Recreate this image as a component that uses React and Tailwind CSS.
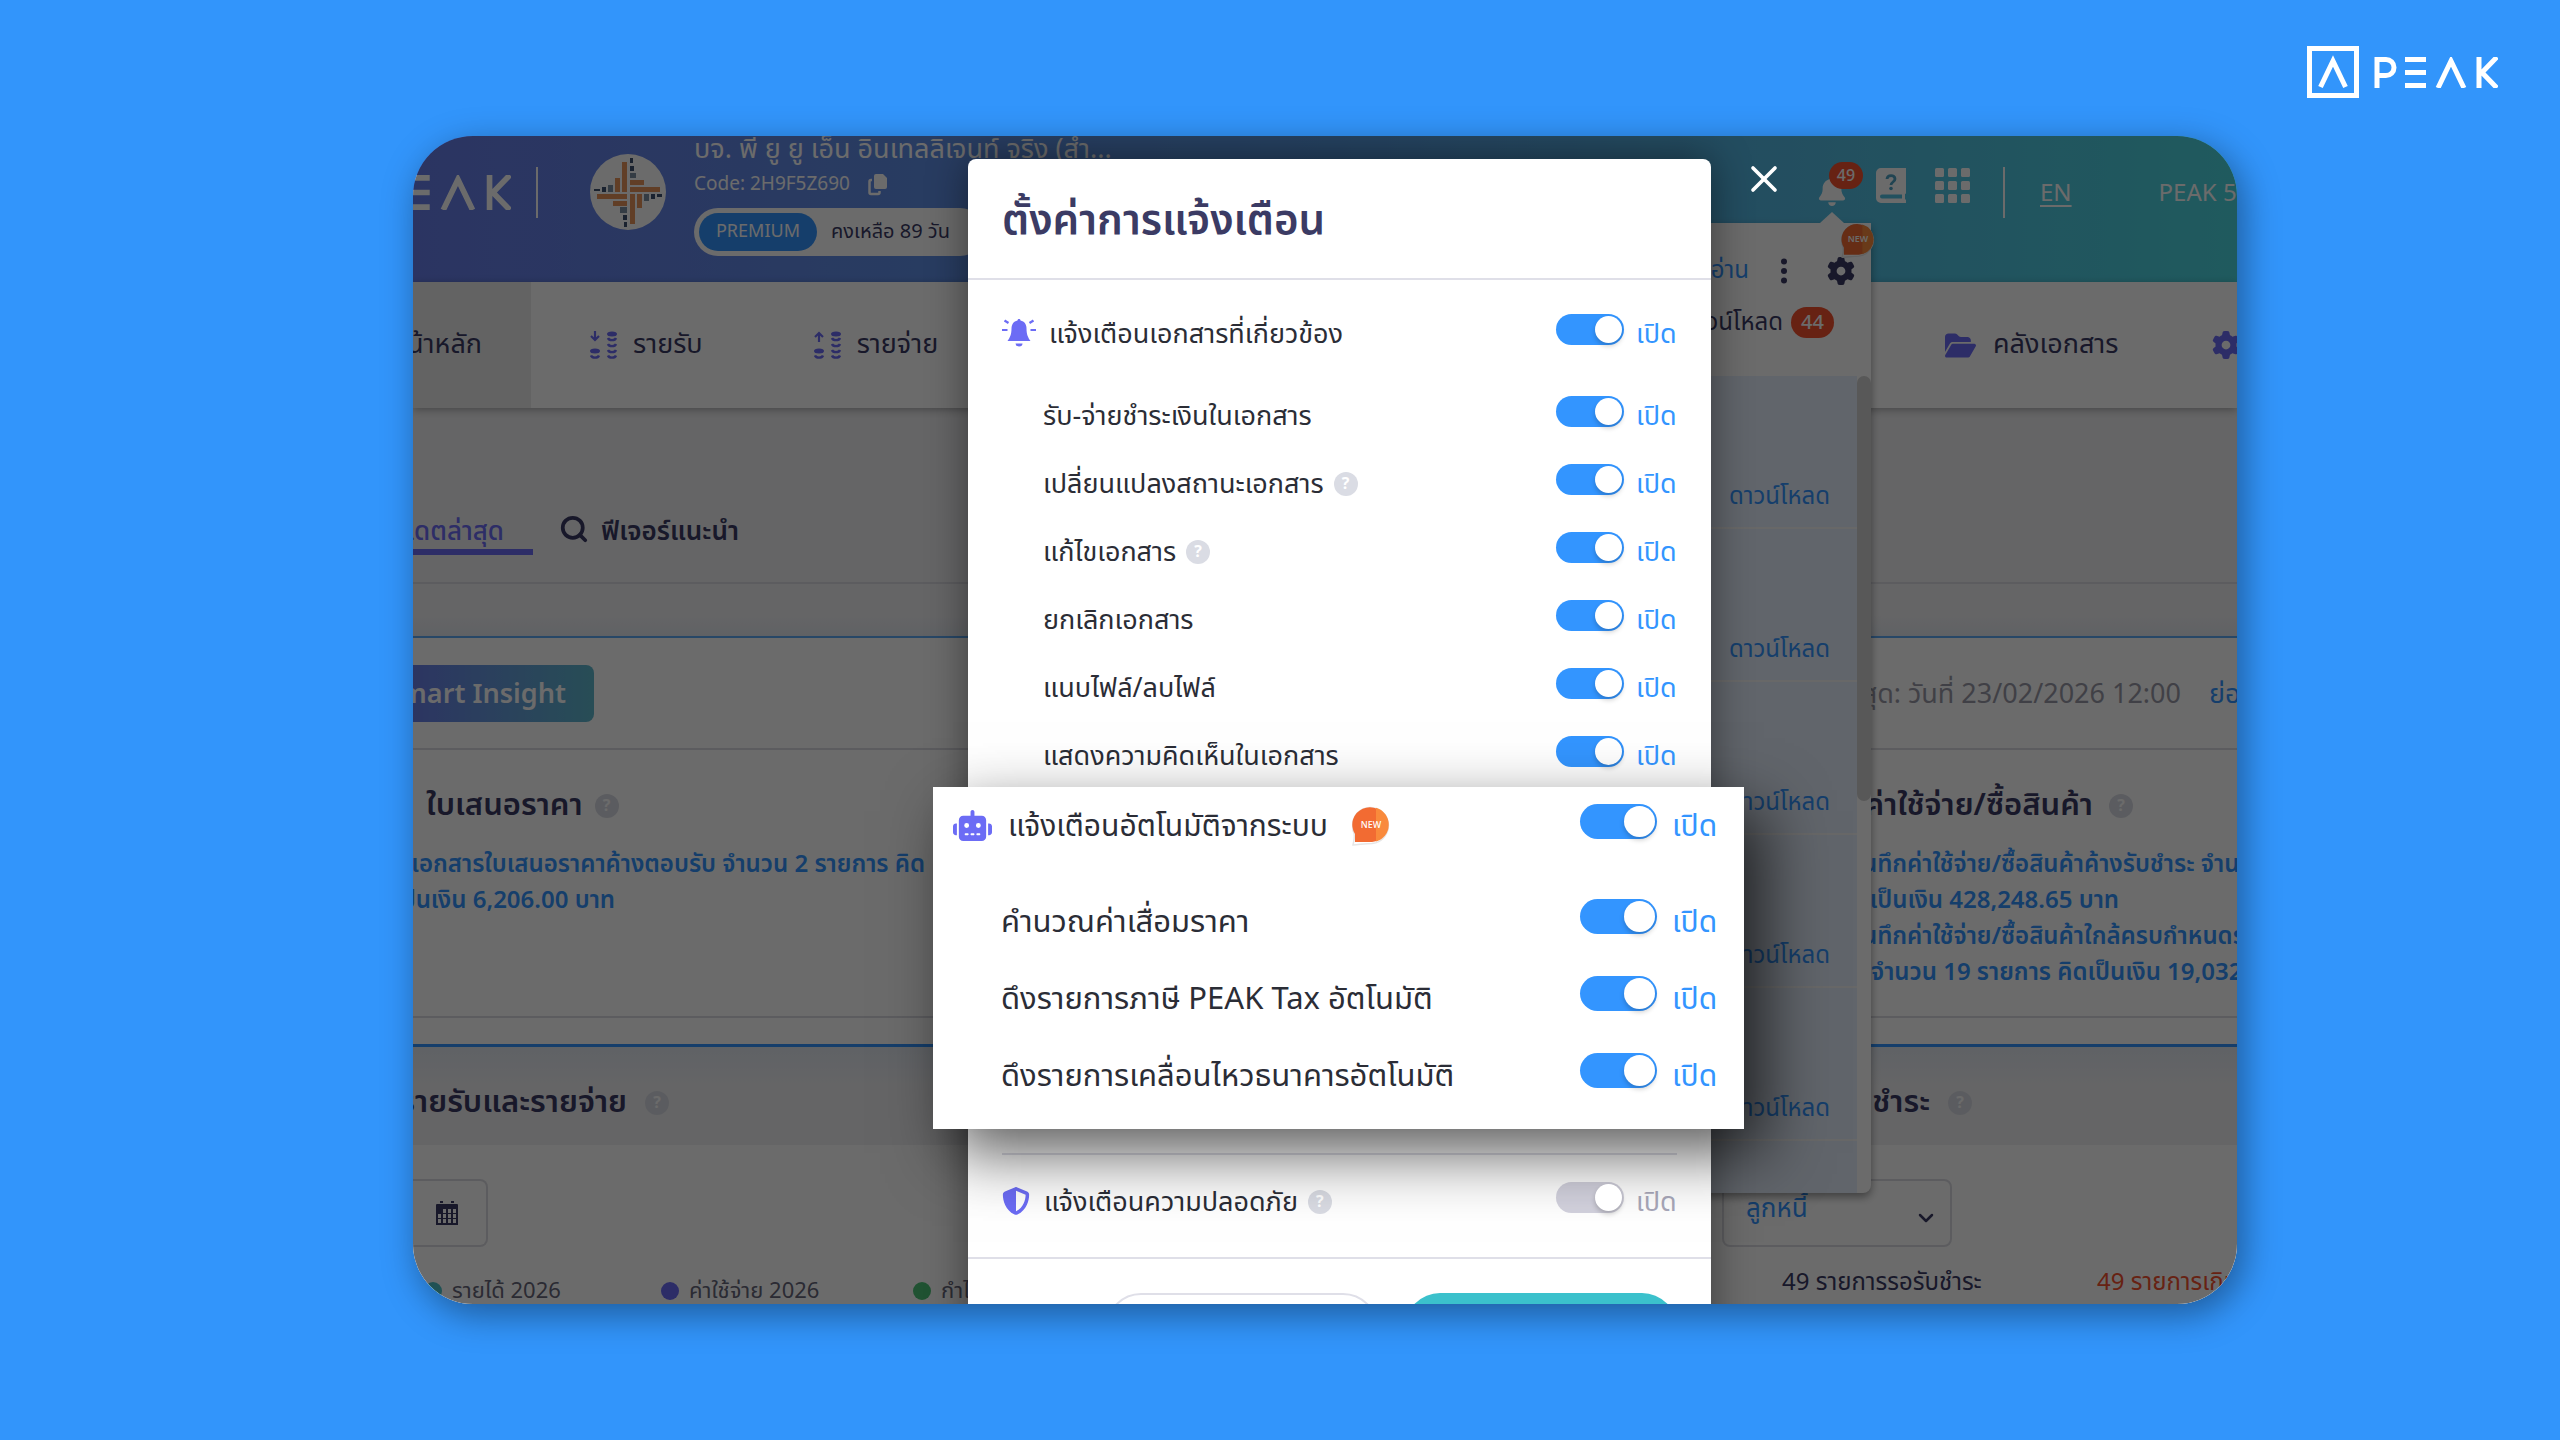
import React from "react";
import { FaBell, FaFolderOpen, FaGear, FaRobot, FaShieldHalved } from "react-icons/fa6";
import { ChevronDown, Search, X } from "lucide-react";

const INK = "text-[#3b3b64]";

function PeakLetters({ className }) {
  return (
    <svg viewBox="0 0 124 31" className={className} fill="none" stroke="currentColor" strokeWidth="5" aria-hidden="true">
      <path d="M3 31V2.500H12a8 8 0 0 1 0 16H3" />
      <path d="M31 2.500H52M31 15.500H52M31 28.500H52" />
      <path d="M64 31L77 4L90 31" />
      <path d="M105 0V31M123 0L108 15.500L123 31" />
    </svg>
  );
}

function BrandLogo() {
  return (
    <div className="flex items-center gap-[15px] text-white" role="img" aria-label="PEAK">
      <svg viewBox="0 0 52 52" className="size-[52px]" fill="none" stroke="currentColor" aria-hidden="true">
        <rect x="2.500" y="2.500" width="47" height="47" strokeWidth="5" />
        <path d="M13.500 41L26 15L38.500 41" strokeWidth="5" />
      </svg>
      <PeakLetters className="h-[31px] w-[124px]" />
    </div>
  );
}

function CompanyMark() {
  return (
    <svg viewBox="0 0 76 76" className="size-[76px] shrink-0" aria-hidden="true">
      <circle cx="38" cy="38" r="38" fill="#fff" />
      <g fill="#e8955c">
        <rect x="32" y="8" width="5" height="30" />
        <rect x="25" y="24" width="5" height="14" />
        <rect x="40" y="33" width="30" height="5" />
        <rect x="40" y="26" width="14" height="5" />
        <rect x="7" y="40" width="30" height="5" />
        <rect x="23" y="47" width="14" height="5" />
        <rect x="40" y="40" width="5" height="30" />
        <rect x="47" y="40" width="5" height="14" />
      </g>
      <g fill="#7d8fa3">
        <rect x="40" y="19" width="6" height="5" />
        <rect x="18" y="31" width="5" height="7" />
        <rect x="54" y="40" width="5" height="7" />
        <rect x="30" y="53" width="7" height="6" />
      </g>
      <g fill="#3f5270">
        <rect x="40" y="12" width="4" height="5" />
        <rect x="12" y="33" width="4" height="5" />
        <rect x="61" y="40" width="4" height="5" />
        <rect x="33" y="61" width="4" height="5" />
        <rect x="40" y="4" width="3" height="5" />
        <rect x="4" y="35" width="6" height="2" />
        <rect x="67" y="40" width="5" height="3" />
        <rect x="34" y="68" width="3" height="5" />
      </g>
    </svg>
  );
}

function CopyIcon() {
  return (
    <svg viewBox="0 0 20 22" className="h-[22px] w-5" aria-hidden="true">
      <path d="M8 0h7l4 4v9a2 2 0 0 1-2 2H8a2 2 0 0 1-2-2V2a2 2 0 0 1 2-2z" fill="currentColor" />
      <path d="M4 6H3a1.500 1.500 0 0 0-1.500 1.500v11A1.500 1.500 0 0 0 3 20h7a1.500 1.500 0 0 0 1.500-1.500V17" fill="none" stroke="currentColor" strokeWidth="2.500" />
    </svg>
  );
}

function HelpBookIcon() {
  return (
    <svg viewBox="0 0 30 35" className="h-[35px] w-[30px]" aria-hidden="true">
      <path fillRule="evenodd" d="M5 0H30V25.500L29 26V31L30 32V35H5a5 5 0 0 1-5-5V5a5 5 0 0 1 5-5zM6 26.500a2 2 0 0 0 0 4H26V26.500z" fill="#fff" />
      <path d="M11 11c.3-4.500 8-4.500 8 0 0 3-4 3-4 6" fill="none" stroke="#4fa3c4" strokeWidth="2.800" />
      <circle cx="15" cy="20.500" r="1.800" fill="#4fa3c4" />
    </svg>
  );
}

function GridIcon() {
  return (
    <svg viewBox="0 0 35 35" className="size-[35px]" fill="#fff" aria-hidden="true">
      {[0, 13, 26].map((y) => [0, 13, 26].map((x) => <rect key={`${x}-${y}`} x={x} y={y} width="9" height="9" rx="1.500" />))}
    </svg>
  );
}

function CoinsIcon({ up }) {
  return (
    <svg viewBox="0 0 28 28" className="size-7" fill="none" stroke="#6c6cf5" aria-hidden="true">
      {up ? <path d="M5 11V2M1 6L5 2L9 6" strokeWidth="2.200" /> : <path d="M5 0V9M1 5L5 9L9 5" strokeWidth="2.200" />}
      <ellipse cx="5" cy="20" rx="5" ry="2.500" fill="#6c6cf5" stroke="none" />
      <ellipse cx="22" cy="3" rx="5" ry="2.500" fill="#6c6cf5" stroke="none" />
      <path d="M1 24.500c1 2.800 7 2.800 8 0" strokeWidth="2.400" />
      <path d="M18 7c1 2.800 7 2.800 8 0M18 13c1 2.800 7 2.800 8 0M18 19c1 2.800 7 2.800 8 0M18 24.500c1 2.800 7 2.800 8 0" strokeWidth="2.400" />
    </svg>
  );
}

function CalendarIcon() {
  return (
    <svg viewBox="0 0 22 24" className="h-6 w-[22px]" aria-hidden="true">
      <path d="M0 4a1 1 0 0 1 1-1H21a1 1 0 0 1 1 1V24H0z" fill="#3b3b64" />
      <rect x="4" y="0" width="3" height="2" fill="#3b3b64" />
      <rect x="15" y="0" width="3" height="2" fill="#3b3b64" />
      <g fill="#fff">
        {[8, 13, 18].map((y) => [2, 7, 12, 17].map((x) => (x === 2 && y === 8 ? null : <rect key={`${x}-${y}`} x={x} y={y} width="3" height="4" />)))}
      </g>
    </svg>
  );
}

function AlarmBellIcon() {
  return (
    <svg viewBox="0 0 34 28" className="h-7 w-[34px]" fill="#6c6cf5" aria-hidden="true">
      <path d="M17 0c1 0 1.500.7 1.500 1.500 4 .8 6 4 6 8 0 6 1.500 9 4 12.500H5.500c2.500-3.500 4-6.500 4-12.500 0-4 2-7.200 6-8C15.500.7 16 0 17 0z" />
      <path d="M13.500 24.500h7a3.500 3 0 0 1-7 0z" />
      <path d="M2.500 1.500L6.500 4M31.500 1.500L27.500 4M0 11H5.500M34 11H28.500" stroke="#6c6cf5" strokeWidth="2.200" />
    </svg>
  );
}

function NewBadge({ className, textClass }) {
  return (
    <svg viewBox="0 0 38 42" className={className} role="img" aria-label="NEW">
      <path d="M1 39C2 34 3 32 2 27A18 18 0 1 1 20 37.500C14 37.500 8 38.500 1 39z" fill="#fff" stroke="#e6e6e6" strokeWidth="1.500" />
      <path d="M3 36V28A17.500 17.500 0 1 1 20 36z" fill="#f26b32" />
      <path d="M24 1.800A17.500 17.500 0 0 1 24 35.500z" fill="#f98a3c" />
      <text x="19" y="22" textAnchor="middle" fill="#fff" className={textClass}>NEW</text>
    </svg>
  );
}

function Help() {
  return (
    <span className="flex size-6 shrink-0 items-center justify-center rounded-full bg-[#dadce4] text-base leading-6 font-bold text-white">?</span>
  );
}

function Toggle({ id, on = true, large }) {
  const size = large
    ? "h-[35px] w-[77px] before:size-[31px] checked:before:translate-x-[42px]"
    : "h-[31px] w-[68px] before:size-[27px] checked:before:translate-x-[37px]";
  const tone = on ? "bg-[#3395ff]" : "bg-[#d3d2de]";
  return (
    <input
      id={id}
      type="checkbox"
      role="switch"
      defaultChecked
      disabled={!on}
      className={`${size} ${tone} shrink-0 appearance-none rounded-full p-0.5 before:block before:rounded-full before:bg-white before:shadow-[0_3px_5px_rgba(0,0,0,0.2)] before:content-['']`}
    />
  );
}

function SettingRow({ id, label, icon, help, badge, on = true, large, section, className }) {
  const size = large ? "leading-10" : "leading-9";
  const labelSize = large ? (section ? "text-[30px]" : "text-[31px]") : "text-[27px]";
  return (
    <div className={`flex items-center ${className}`}>
      {icon && <span className="shrink-0 pt-2">{icon}</span>}
      <label htmlFor={id} className={`pt-3 whitespace-nowrap text-[#2b2d36] ${size} ${labelSize}`}>
        {label}
      </label>
      {help && <span className="ml-2.5 pt-2.5"><Help /></span>}
      {badge && <NewBadge className="mt-3 ml-2 h-[42px] w-[38px]" textClass="text-[9px] font-medium" />}
      <div className={`ml-auto flex items-center ${large ? "gap-[15px]" : "gap-3"}`}>
        <Toggle id={id} on={on} large={large} />
        <span className={`pt-3 ${size} ${large ? "w-11 text-[30px]" : "w-[41px] text-[27px]"} ${on ? "text-[#3395ff]" : "text-[#a9a8ba]"}`}>เปิด</span>
      </div>
    </div>
  );
}

function TopBar() {
  return (
    <header className="flex h-[146px] shrink-0 items-start bg-linear-to-r from-[#677de9] via-[#5a9de6] to-[#4bd7e0] text-white">
      <div className="flex w-[98px] justify-end pt-[39px]">
        <PeakLetters className="h-[35px] w-[140px] shrink-0" />
      </div>
      <span className="mt-[31px] ml-[25px] h-[51px] w-0.5 bg-white" />
      <span className="mt-[18px] ml-[52px]"><CompanyMark /></span>
      <div className="ml-7 flex flex-col whitespace-nowrap">
        <div className="-mt-1.5 h-10 text-[27px] leading-10">บจ. พี ยู ยู เอ็น อินเทลลิเจนท์ จริง (สำ...</div>
        <div className="flex h-[30px] items-center gap-[18px] text-[19px] leading-7">
          Code: 2H9F5Z690 <CopyIcon />
        </div>
        <div className="mt-2 flex h-12 w-[290px] items-center rounded-full bg-white p-[5px] text-[#3b3b64]">
          <span className="flex h-full w-[118px] items-center justify-center rounded-full bg-[#3395ff] text-lg text-white">PREMIUM</span>
          <span className="ml-3.5 text-xl">คงเหลือ 89 วัน</span>
        </div>
      </div>
      <div className="ml-auto flex w-[420px] items-start">
        <button type="button" aria-label="การแจ้งเตือน" className="relative pt-[40px]">
          <FaBell className="size-[30px]" />
          <span className="absolute top-[26px] left-3 flex h-[27px] w-[34px] items-center justify-center rounded-full bg-[#f5512f] text-base font-medium">49</span>
        </button>
        <span className="mt-8 ml-[29px]"><HelpBookIcon /></span>
        <span className="mt-8 ml-[29px]"><GridIcon /></span>
        <span className="mt-[31px] ml-[33px] h-[51px] w-0.5 bg-white" />
        <a href="#en" className="mt-11 ml-[35px] text-2xl leading-7 underline underline-offset-4">EN</a>
        <span className="mt-11 ml-[87px] text-2xl leading-7 whitespace-nowrap">PEAK 5</span>
      </div>
    </header>
  );
}

function NavBar() {
  return (
    <nav className={`relative flex h-[126px] shrink-0 items-center bg-white text-[27px] leading-10 whitespace-nowrap shadow-[0_2px_8px_rgba(0,0,0,0.3)] ${INK}`}>
      <a href="#home" className="flex h-full w-[118px] items-center justify-end bg-[#ececec] pr-[49px]">หน้าหลัก</a>
      <a href="#income" className="ml-[59px] flex items-center gap-[15px]"><CoinsIcon />รายรับ</a>
      <a href="#expense" className="ml-[111px] flex items-center gap-[15px]"><CoinsIcon up />รายจ่าย</a>
      <div className="-mr-[3px] ml-auto flex w-[295px] items-center">
        <a href="#files" className="flex items-center gap-[17px]"><FaFolderOpen className="size-[31px] text-[#6c6cf5]" />คลังเอกสาร</a>
        <FaGear className="ml-auto size-7 shrink-0 text-[#6c6cf5]" />
      </div>
    </nav>
  );
}

function Legend({ color, children, className }) {
  return (
    <span className={`flex items-center gap-2.5 ${className}`}>
      <i className={`size-[18px] rounded-full ${color}`} />
      {children}
    </span>
  );
}

function PanelTitle({ width, children }) {
  return (
    <h2 className={`flex items-center border-t-[3px] border-[#3395ff] bg-linear-to-b from-[#e3e9f1] to-[#f1f1f3] to-40% pt-3.5 text-[31px] leading-10 font-semibold ${INK}`}>
      <span className={`flex justify-end ${width}`}>{children}</span>
      <span className="ml-[18px]"><Help /></span>
    </h2>
  );
}

function Dashboard() {
  return (
    <main className="flex grow flex-col bg-[#f1f1f3] whitespace-nowrap">
      <div className="flex h-[176px] items-end border-b-2 border-[#dcdce2] pb-[27px] text-[26px] leading-9 font-semibold">
        <div className="flex h-[41px] w-[120px] justify-end border-b-[6px] border-[#6c6cf5] pr-[29px] font-medium text-[#6c6cf5]">อัปเดตล่าสุด</div>
        <div className={`ml-[26px] flex h-[41px] items-start gap-3 ${INK}`}>
          <Search className="size-[30px]" strokeWidth={3} />
          ฟีเจอร์แนะนำ
        </div>
      </div>
      <div className="h-[52px] bg-linear-to-b from-transparent from-60% to-[#e4e8ef]" />
      <section className="flex h-[114px] items-center border-t-2 border-b-2 border-t-[#5ea9f5] border-b-[#dcdce2] bg-white">
        <button type="button" className="flex h-[57px] w-[181px] items-center justify-end rounded-r-lg bg-linear-to-r from-[#6a7fe9] to-[#5fb8cd] pt-1 pr-7 text-[27px] font-semibold text-white">
          Smart Insight
        </button>
        <div className="ml-auto flex w-[366px] pt-1 text-[27px] leading-10">
          <span className="flex w-[310px] justify-end text-[#9a9aa8]">ข้อมูลล่าสุด: วันที่ 23/02/2026 12:00</span>
          <a href="#collapse" className="ml-7 text-[#3395ff]">ย่อ</a>
        </div>
      </section>
      <section className="flex h-[268px] justify-between border-b-2 border-[#dcdce2] bg-white pt-9 text-2xl leading-9 font-semibold text-[#3395ff]">
        <div className="w-[512px]">
          <h2 className={`ml-[13px] flex h-10 items-center gap-3 text-[31px] leading-10 ${INK}`}>ใบเสนอราคา <Help /></h2>
          <div className="mt-[21px] flex justify-end">เอกสารใบเสนอราคาค้างตอบรับ จำนวน 2 รายการ คิด</div>
          <div className="flex w-[202px] justify-end">เป็นเงิน 6,206.00 บาท</div>
        </div>
        <div className="w-[366px]">
          <h2 className={`flex h-10 w-[262px] items-center justify-end gap-4 text-[31px] leading-10 ${INK}`}>ค่าใช้จ่าย/ซื้อสินค้า <Help /></h2>
          <div className="mt-[21px] -ml-6">บันทึกค่าใช้จ่าย/ซื้อสินค้าค้างรับชำระ จำนวน</div>
          <div className="flex w-[248px] justify-end">คิดเป็นเงิน 428,248.65 บาท</div>
          <div className="-ml-6">บันทึกค่าใช้จ่าย/ซื้อสินค้าใกล้ครบกำหนดรับ</div>
          <div>จำนวน 19 รายการ คิดเป็นเงิน 19,032</div>
        </div>
      </section>
      <div className="h-[26px] bg-white" />
      <section className="grid grow grid-cols-[1309px_1fr] grid-rows-[101px_1fr] bg-white">
        <PanelTitle width="w-[214px]">รายรับและรายจ่าย</PanelTitle>
        <PanelTitle width="w-[208px]">รอชำระ</PanelTitle>
        <div>
          <button type="button" aria-label="เลือกช่วงวันที่" className="mt-[34px] flex h-[68px] w-[75px] items-center justify-end rounded-r-lg border-2 border-l-0 border-[#dcdce2] pr-7">
            <CalendarIcon />
          </button>
          <div className="mt-6 ml-[11px] flex h-10 items-center text-[22px] text-[#66667a]">
            <Legend color="bg-[#4dc1c8]" className="w-[237px]">รายได้ 2026</Legend>
            <Legend color="bg-[#6c6cf5]" className="w-[252px]">ค่าใช้จ่าย 2026</Legend>
            <Legend color="bg-[#4dc477]">กำไร 2026</Legend>
          </div>
        </div>
        <div>
          <div className="relative mt-[34px] w-[230px]">
            <select aria-label="ประเภทรายการ" defaultValue="ar" className="h-[68px] w-full appearance-none rounded-lg border-2 border-[#dcdce2] bg-transparent pb-2 pl-[22px] text-[26px] text-[#3395ff]">
              <option value="ar">ลูกหนี้</option>
            </select>
            <ChevronDown className="absolute top-[27px] right-3.5 size-6 text-[#3b3b64]" strokeWidth={2.5} />
          </div>
          <div className={`mt-4 ml-[60px] flex h-10 items-center text-2xl ${INK}`}>
            <span className="w-[315px]">49 รายการรอรับชำระ</span>
            <span className="text-[#f5512f]">49 รายการเกินกำหนด</span>
          </div>
        </div>
      </section>
    </main>
  );
}

function NotificationPanel() {
  return (
    <aside className="absolute top-[87px] right-[366px] w-[460px] rounded-b-lg bg-white text-2xl leading-9 whitespace-nowrap shadow-[0_4px_8px_rgba(0,0,0,0.4)]">
      <span className="absolute -top-[11px] right-[27px] h-[11px] w-6 bg-white [clip-path:polygon(50%_0,100%_100%,0_100%)]" />
      <NewBadge className="absolute top-0 -right-1 h-[37px] w-[34px]" textClass="text-[10px] font-semibold" />
      <div className="flex h-[84px] items-center justify-end pt-3 pr-4">
        <a href="#read" className="text-[#3395ff]">ทำเครื่องหมายว่าอ่าน</a>
        <svg viewBox="0 0 6 26" className="mr-10 ml-8 h-[26px] w-1.5" fill="#3b3b64" aria-hidden="true">
          <circle cx="3" cy="3.500" r="3" /><circle cx="3" cy="13" r="3" /><circle cx="3" cy="22.500" r="3" />
        </svg>
        <FaGear className="size-7 text-[#3b3b64]" />
      </div>
      <div className={`flex h-[69px] items-start justify-end gap-2 pr-[37px] leading-8 ${INK}`}>
        ดาวน์โหลด
        <span className="flex h-[31px] w-[43px] items-center justify-center rounded-full bg-[#f5512f] text-xl font-medium text-white">44</span>
      </div>
      <div className="flex">
        <ul className="grow bg-[#e7f0ff]">
          {[0, 1, 2, 3, 4].map((n) => (
            <li key={n} className="flex h-[153px] items-end justify-end border-b-2 border-[#f8f8f8] pr-[27px] pb-3">
              <a href="#download" className="text-[#3395ff]">ดาวน์โหลด</a>
            </li>
          ))}
          <li className="h-[52px]" />
        </ul>
        <div className="w-3.5"><div className="h-[425px] rounded-full bg-[#d2d2d2]" /></div>
      </div>
    </aside>
  );
}

const documentRows = [
  { id: "pay", label: "รับ-จ่ายชำระเงินในเอกสาร" },
  { id: "status", label: "เปลี่ยนแปลงสถานะเอกสาร", help: true },
  { id: "edit", label: "แก้ไขเอกสาร", help: true },
  { id: "void", label: "ยกเลิกเอกสาร" },
  { id: "attach", label: "แนบไฟล์/ลบไฟล์" },
  { id: "comment", label: "แสดงความคิดเห็นในเอกสาร" },
];

const systemRows = [
  { id: "depreciation", label: "คำนวณค่าเสื่อมราคา" },
  { id: "tax", label: "ดึงรายการภาษี PEAK Tax อัตโนมัติ" },
  { id: "bank", label: "ดึงรายการเคลื่อนไหวธนาคารอัตโนมัติ" },
];

function SettingsDialog() {
  return (
    <div role="dialog" aria-labelledby="dialog-title" className="absolute top-[23px] left-[555px] w-[743px] rounded-t-lg bg-white shadow-[0_0_40px_rgba(0,0,0,0.45)]">
      <button type="button" aria-label="ปิด" className="absolute -top-0.5 -right-[75px] text-white">
        <X className="size-11" strokeWidth={2} />
      </button>
      <div className="flex h-[121px] items-center border-b-2 border-[#dfdfe8] px-[34px] pt-1">
        <h1 id="dialog-title" className={`text-[42px] leading-[60px] font-semibold ${INK}`}>ตั้งค่าการแจ้งเตือน</h1>
      </div>
      <div className="px-[34px] pt-[19px]">
        <SettingRow id="documents" className="h-[60px] gap-[13px]" section label="แจ้งเตือนเอกสารที่เกี่ยวข้อง" icon={<AlarmBellIcon />} />
        <div className="mt-[18px] pl-[41px]">
          {documentRows.map((row) => <SettingRow key={row.id} className="h-[68px]" {...row} />)}
        </div>
      </div>
      <section className="relative mt-0.5 -mr-[33px] -ml-[35px] bg-white pr-[28px] pb-5 pl-5 shadow-[20px_24px_60px_rgba(0,0,0,0.65)]">
        <SettingRow id="system" className="h-[68px] gap-4" large section badge label="แจ้งเตือนอัตโนมัติจากระบบ" icon={<FaRobot className="size-[39px] text-[#6c6cf5]" />} />
        <div className="mt-[23px] pl-12">
          {systemRows.map((row) => <SettingRow key={row.id} className="h-[77px]" large {...row} />)}
        </div>
      </section>
      <div className="px-[34px] pt-6">
        <hr className="border-t-2 border-[#dfdfe8]" />
        <SettingRow id="security" className="mt-3 h-[60px]" section on={false} help label="แจ้งเตือนความปลอดภัย" icon={<FaShieldHalved className="mr-3.5 size-7 text-[#6c6cf5]" />} />
      </div>
      <div className="mt-[30px] flex justify-end gap-[27px] border-t-2 border-[#dfdfe8] px-[34px] py-[34px]">
        <button type="button" className="h-[70px] w-[272px] rounded-full border-2 border-[#dfdfe8] text-2xl">ยกเลิก</button>
        <button type="button" className="h-[70px] w-[272px] rounded-full bg-[#3bc1cc] text-2xl text-white">บันทึก</button>
      </div>
    </div>
  );
}

export default function App() {
  return (
    <div className="flex min-h-screen flex-col bg-[#3295fb] font-['Noto_Sans_Thai','Noto_Sans',sans-serif]">
      <div className="flex h-[136px] items-start justify-end pt-[46px] pr-[62px]"><BrandLogo /></div>
      <div className="pr-[323px] pl-[413px]">
        <div className="relative flex h-[calc(100vh-272px)] w-full flex-col overflow-hidden rounded-[60px] shadow-[6px_10px_36px_rgba(0,0,0,0.4)]">
          <TopBar />
          <NavBar />
          <Dashboard />
          <NotificationPanel />
          <div className="absolute inset-0 bg-black/58" />
          <SettingsDialog />
        </div>
      </div>
    </div>
  );
}
